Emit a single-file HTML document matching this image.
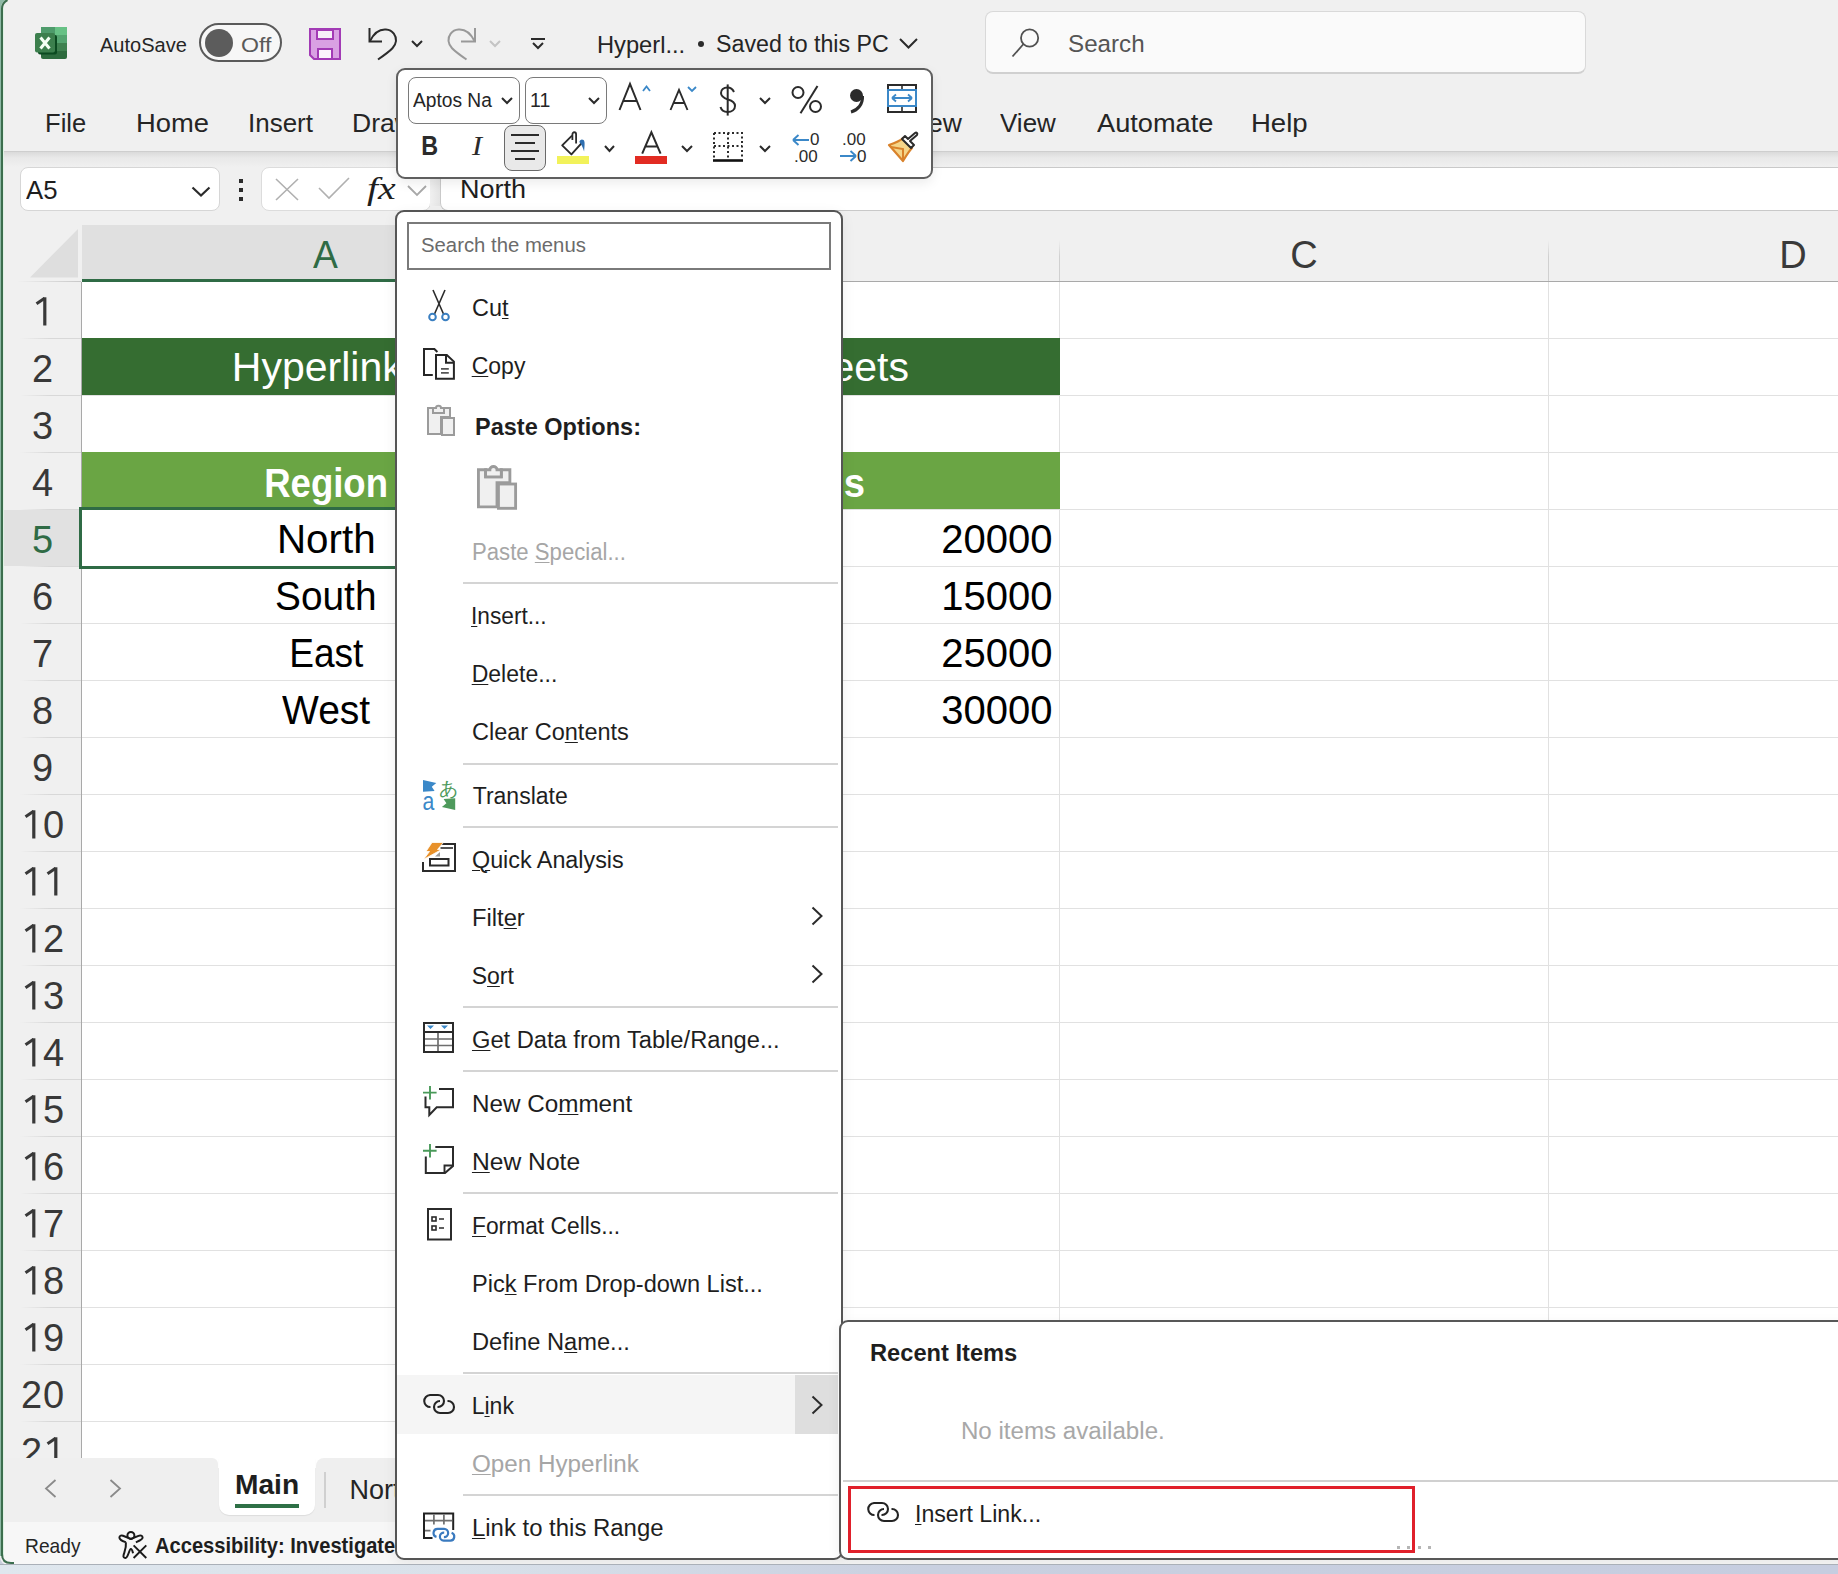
<!DOCTYPE html>
<html><head><meta charset="utf-8"><style>
html,body{margin:0;padding:0;}
body{width:1838px;height:1574px;position:relative;overflow:hidden;background:#c9cfdd;font-family:'Liberation Sans', sans-serif;}
u{text-decoration-thickness:1.2px;text-underline-offset:2px;}

</style></head><body>
<div style="position:absolute;left:0px;top:0px;width:1838px;height:1565px;background:#f0f0f0;border-radius:0 0 0 8px;"></div>
<svg style="position:absolute;left:35px;top:27px;overflow:visible;" width="32" height="32" viewBox="0 0 32 32">
      <rect x="6" y="0" width="26" height="32" rx="2" fill="#2d6b3e"/>
      <rect x="6" y="0" width="14" height="8" fill="#4e9b6b"/>
      <rect x="20" y="0" width="12" height="8" fill="#67c185"/>
      <rect x="20" y="8" width="12" height="8" fill="#54a470"/>
      <rect x="20" y="16" width="12" height="8" fill="#3f8150"/>
      <rect x="3" y="8" width="19" height="19.5" rx="2" fill="#0b4a20"/>
      <rect x="0" y="6" width="20" height="19.5" rx="2" fill="#3c7f4d"/>
      <path d="M5.5 10.5 L14.5 21.5 M14.5 10.5 L5.5 21.5" stroke="#f4fff4" stroke-width="3"/>
    </svg>
<div style="position:absolute;left:99.50px;top:34.65px;font:400 20.5px/20.5px 'Liberation Sans', sans-serif;color:#252525;white-space:nowrap;transform:scaleX(0.9774);transform-origin:0.00px 0;">AutoSave</div>
<div style="position:absolute;left:199px;top:23px;width:83px;height:39px;box-sizing:border-box;border:2px solid #5a5a5a;border-radius:20px;background:#f7f7f7;"></div>
<div style="position:absolute;left:205px;top:29px;width:28px;height:28px;border-radius:50%;background:#5c5c5c;"></div>
<div style="position:absolute;left:240.50px;top:34.23px;font:400 21px/21px 'Liberation Sans', sans-serif;color:#5a5a5a;white-space:nowrap;transform:scaleX(1.1012);transform-origin:1.00px 0;">Off</div>
<svg style="position:absolute;left:309px;top:28px;overflow:visible;" width="32" height="32" viewBox="0 0 32 32">
      <path d="M1 1 H31 V31 H5 L1 27 Z" fill="#d9a1e3" stroke="#a23bb5" stroke-width="2"/>
      <rect x="8" y="2" width="16" height="9" fill="#f6eef8" stroke="#a23bb5" stroke-width="2"/>
      <rect x="9" y="21" width="14" height="10" fill="#fbf5fc" stroke="#a23bb5" stroke-width="2"/>
    </svg>
<svg style="position:absolute;left:368px;top:28px;overflow:visible;" width="30" height="33" viewBox="0 0 30 33">
      <path d="M1.5 0 V13.5 H14" fill="none" stroke="#2b2b2b" stroke-width="2"/>
      <path d="M2 13 C6 5 12 1 18 1.5 C25 2 28.5 8 28 13 C27.5 18 25 21 10 31.5" fill="none" stroke="#2b2b2b" stroke-width="2"/>
    </svg>
<svg style="position:absolute;left:411px;top:40px;overflow:visible;" width="12" height="7" viewBox="0 0 12 7"><path d="M1 1 L6 6 L11 1" fill="none" stroke="#2b2b2b" stroke-width="2"/></svg>
<svg style="position:absolute;left:447px;top:28px;overflow:visible;" width="30" height="33" viewBox="0 0 30 33">
      <path d="M28 0 V13.5 H14" fill="none" stroke="#999" stroke-width="2"/>
      <path d="M27.5 13 C23.5 5 17.5 1 11.5 1.5 C4.5 2 1 8 1.5 13 C2 18 4.5 21 19.5 31.5" fill="none" stroke="#999" stroke-width="2"/>
    </svg>
<svg style="position:absolute;left:489px;top:40px;overflow:visible;" width="12" height="7" viewBox="0 0 12 7"><path d="M1 1 L6 6 L11 1" fill="none" stroke="#c4c4c4" stroke-width="2"/></svg>
<svg style="position:absolute;left:531px;top:38px;overflow:visible;" width="15" height="13" viewBox="0 0 15 13"><path d="M0 1 H14" stroke="#2b2b2b" stroke-width="2"/><path d="M2 5 L7 10 L12 5" fill="none" stroke="#2b2b2b" stroke-width="2"/></svg>
<div style="position:absolute;left:596.80px;top:32.69px;font:400 24px/24px 'Liberation Sans', sans-serif;color:#252525;white-space:nowrap;transform:scaleX(0.9863);transform-origin:1.00px 0;">Hyperl...</div>
<div style="position:absolute;left:698px;top:41px;width:6px;height:6px;border-radius:50%;background:#2b2b2b;"></div>
<div style="position:absolute;left:715.70px;top:33.11px;font:400 23.5px/23.5px 'Liberation Sans', sans-serif;color:#252525;white-space:nowrap;transform:scaleX(0.9870);transform-origin:1.00px 0;">Saved to this PC</div>
<svg style="position:absolute;left:899px;top:38px;overflow:visible;" width="19" height="11" viewBox="0 0 19 11"><path d="M1 1 L9.5 9.5 L18 1" fill="none" stroke="#2b2b2b" stroke-width="2"/></svg>
<div style="position:absolute;left:985px;top:11px;width:601px;height:63px;box-sizing:border-box;background:#fafafa;border:1px solid #d9d9d9;border-bottom:2px solid #d0d0d0;border-radius:8px;"></div>
<svg style="position:absolute;left:1011px;top:27px;overflow:visible;" width="30" height="31" viewBox="0 0 30 31"><circle cx="18.6" cy="11" r="8.6" fill="none" stroke="#505050" stroke-width="1.8"/><path d="M12.5 17 L1.5 29.5" stroke="#505050" stroke-width="1.8"/></svg>
<div style="position:absolute;left:1067.50px;top:32.06px;font:400 24.5px/24.5px 'Liberation Sans', sans-serif;color:#555;white-space:nowrap;transform:scaleX(0.9868);transform-origin:1.00px 0;">Search</div>
<div style="position:absolute;left:44.50px;top:109.77px;font:400 26.5px/26.5px 'Liberation Sans', sans-serif;color:#252525;white-space:nowrap;transform:scaleX(0.9634);transform-origin:2.00px 0;">File</div>
<div style="position:absolute;left:135.80px;top:109.77px;font:400 26.5px/26.5px 'Liberation Sans', sans-serif;color:#252525;white-space:nowrap;transform:scaleX(1.0331);transform-origin:2.00px 0;">Home</div>
<div style="position:absolute;left:248.00px;top:109.77px;font:400 26.5px/26.5px 'Liberation Sans', sans-serif;color:#252525;white-space:nowrap;transform:scaleX(0.9798);transform-origin:2.00px 0;">Insert</div>
<div style="position:absolute;left:352.00px;top:109.77px;font:400 26.5px/26.5px 'Liberation Sans', sans-serif;color:#252525;white-space:nowrap;">Draw</div>
<div style="position:absolute;left:962.00px;top:109.77px;font:400 26.5px/26.5px 'Liberation Sans', sans-serif;color:#252525;white-space:nowrap;transform:translateX(-100%);">Review</div>
<div style="position:absolute;left:1000.00px;top:109.77px;font:400 26.5px/26.5px 'Liberation Sans', sans-serif;color:#252525;white-space:nowrap;transform:scaleX(0.9806);transform-origin:0.00px 0;">View</div>
<div style="position:absolute;left:1096.60px;top:109.77px;font:400 26.5px/26.5px 'Liberation Sans', sans-serif;color:#252525;white-space:nowrap;transform:scaleX(1.0258);transform-origin:0.00px 0;">Automate</div>
<div style="position:absolute;left:1250.90px;top:109.77px;font:400 26.5px/26.5px 'Liberation Sans', sans-serif;color:#252525;white-space:nowrap;transform:scaleX(1.0413);transform-origin:2.00px 0;">Help</div>
<div style="position:absolute;left:0px;top:151px;width:1838px;height:1px;background:#cecece;"></div>
<div style="position:absolute;left:0px;top:152px;width:1838px;height:15px;background:linear-gradient(#dadada,#e9e9e9 40%,#ececec 70%,#f0f0f0);"></div>
<div style="position:absolute;left:20px;top:167px;width:200px;height:44px;box-sizing:border-box;background:#fff;border:1px solid #d6d6d6;border-radius:8px;"></div>
<div style="position:absolute;left:26.00px;top:176.99px;font:400 26px/26px 'Liberation Sans', sans-serif;color:#1e1e1e;white-space:nowrap;transform:scaleX(0.9891);transform-origin:0.00px 0;">A5</div>
<svg style="position:absolute;left:191px;top:186px;overflow:visible;" width="20" height="11" viewBox="0 0 20 11"><path d="M1.5 1.5 L10 9.5 L18.5 1.5" fill="none" stroke="#2b2b2b" stroke-width="2.2"/></svg>
<div style="position:absolute;left:239px;top:179px;width:4px;height:4px;background:#2b2b2b;"></div>
<div style="position:absolute;left:239px;top:188px;width:4px;height:4px;background:#2b2b2b;"></div>
<div style="position:absolute;left:239px;top:197px;width:4px;height:4px;background:#2b2b2b;"></div>
<div style="position:absolute;left:261px;top:167px;width:170px;height:44px;box-sizing:border-box;background:#fff;border:1px solid #dcdcdc;border-radius:8px;"></div>
<svg style="position:absolute;left:275px;top:178px;overflow:visible;" width="24" height="23" viewBox="0 0 24 23"><path d="M1 1 L23 22 M23 1 L1 22" stroke="#b0b0b0" stroke-width="1.6"/></svg>
<svg style="position:absolute;left:318px;top:177px;overflow:visible;" width="32" height="23" viewBox="0 0 32 23"><path d="M1 11 L11 21 L31 1" fill="none" stroke="#b0b0b0" stroke-width="1.6"/></svg>
<div style="position:absolute;left:367.00px;top:173.26px;font:italic 400 31px/31px 'Liberation Serif', serif;color:#1e1e1e;white-space:nowrap;transform:scaleX(1.2825);transform-origin:0.00px 0;">fx</div>
<svg style="position:absolute;left:407px;top:185px;overflow:visible;" width="20" height="11" viewBox="0 0 20 11"><path d="M1 1 L10 10 L19 1" fill="none" stroke="#a8a8a8" stroke-width="1.8"/></svg>
<div style="position:absolute;left:440px;top:167px;width:1400px;height:44px;box-sizing:border-box;background:#fff;border:1px solid #c9c9c9;border-right:none;border-radius:8px 0 0 8px;"></div>
<div style="position:absolute;left:430px;top:172px;width:10px;height:34px;background:linear-gradient(90deg,#f0f0f0,#e4e4e4);"></div>
<div style="position:absolute;left:459.90px;top:176.27px;font:400 26.5px/26.5px 'Liberation Sans', sans-serif;color:#1e1e1e;white-space:nowrap;transform:scaleX(1.0199);transform-origin:2.00px 0;">North</div>
<div style="position:absolute;left:82px;top:225px;width:489px;height:54px;background:#e0e0e0;"></div>
<div style="position:absolute;left:82px;top:279px;width:489px;height:3px;background:#2f6b45;"></div>
<div style="position:absolute;left:571px;top:281px;width:1267px;height:1px;background:#a9a9a9;"></div>
<div style="position:absolute;left:17px;top:281px;width:64px;height:1px;background:linear-gradient(90deg,rgba(200,200,200,0),#c8c8c8);"></div>
<svg style="position:absolute;left:4px;top:225px;overflow:visible;" width="77" height="57" viewBox="0 0 77 57"><path d="M26 52.5 L74 4 V52.5 Z" fill="#dedede"/></svg>
<div style="position:absolute;left:313.30px;top:235.84px;font:400 38px/38px 'Liberation Sans', sans-serif;color:#2f6b45;white-space:nowrap;transform:scaleX(0.9808);transform-origin:0.00px 0;">A</div>
<div style="position:absolute;left:0.00px;top:235.84px;font:400 38px/38px 'Liberation Sans', sans-serif;color:#3a3a3a;white-space:nowrap;width:0;display:flex;justify-content:center;left:1304px !important;">C</div>
<div style="position:absolute;left:0.00px;top:235.84px;font:400 38px/38px 'Liberation Sans', sans-serif;color:#3a3a3a;white-space:nowrap;width:0;display:flex;justify-content:center;left:1793px !important;">D</div>
<div style="position:absolute;left:1059px;top:240px;width:1px;height:41px;background:linear-gradient(rgba(210,210,210,0),#d0d0d0 40%);"></div>
<div style="position:absolute;left:1548px;top:240px;width:1px;height:41px;background:linear-gradient(rgba(210,210,210,0),#d0d0d0 40%);"></div>
<div style="position:absolute;left:82px;top:282px;width:1756px;height:1176px;background:#fff;"></div>
<div style="position:absolute;left:81px;top:282px;width:1px;height:1176px;background:#a9a9a9;"></div>
<div style="position:absolute;left:82px;top:338px;width:1756px;height:1px;background:#e1e1e1;"></div>
<div style="position:absolute;left:20px;top:338px;width:61px;height:1px;background:linear-gradient(90deg,rgba(215,215,215,0),#d8d8d8 50%);"></div>
<div style="position:absolute;left:82px;top:395px;width:1756px;height:1px;background:#e1e1e1;"></div>
<div style="position:absolute;left:20px;top:395px;width:61px;height:1px;background:linear-gradient(90deg,rgba(215,215,215,0),#d8d8d8 50%);"></div>
<div style="position:absolute;left:82px;top:452px;width:1756px;height:1px;background:#e1e1e1;"></div>
<div style="position:absolute;left:20px;top:452px;width:61px;height:1px;background:linear-gradient(90deg,rgba(215,215,215,0),#d8d8d8 50%);"></div>
<div style="position:absolute;left:82px;top:509px;width:1756px;height:1px;background:#e1e1e1;"></div>
<div style="position:absolute;left:20px;top:509px;width:61px;height:1px;background:linear-gradient(90deg,rgba(215,215,215,0),#d8d8d8 50%);"></div>
<div style="position:absolute;left:82px;top:566px;width:1756px;height:1px;background:#e1e1e1;"></div>
<div style="position:absolute;left:20px;top:566px;width:61px;height:1px;background:linear-gradient(90deg,rgba(215,215,215,0),#d8d8d8 50%);"></div>
<div style="position:absolute;left:82px;top:623px;width:1756px;height:1px;background:#e1e1e1;"></div>
<div style="position:absolute;left:20px;top:623px;width:61px;height:1px;background:linear-gradient(90deg,rgba(215,215,215,0),#d8d8d8 50%);"></div>
<div style="position:absolute;left:82px;top:680px;width:1756px;height:1px;background:#e1e1e1;"></div>
<div style="position:absolute;left:20px;top:680px;width:61px;height:1px;background:linear-gradient(90deg,rgba(215,215,215,0),#d8d8d8 50%);"></div>
<div style="position:absolute;left:82px;top:737px;width:1756px;height:1px;background:#e1e1e1;"></div>
<div style="position:absolute;left:20px;top:737px;width:61px;height:1px;background:linear-gradient(90deg,rgba(215,215,215,0),#d8d8d8 50%);"></div>
<div style="position:absolute;left:82px;top:794px;width:1756px;height:1px;background:#e1e1e1;"></div>
<div style="position:absolute;left:20px;top:794px;width:61px;height:1px;background:linear-gradient(90deg,rgba(215,215,215,0),#d8d8d8 50%);"></div>
<div style="position:absolute;left:82px;top:851px;width:1756px;height:1px;background:#e1e1e1;"></div>
<div style="position:absolute;left:20px;top:851px;width:61px;height:1px;background:linear-gradient(90deg,rgba(215,215,215,0),#d8d8d8 50%);"></div>
<div style="position:absolute;left:82px;top:908px;width:1756px;height:1px;background:#e1e1e1;"></div>
<div style="position:absolute;left:20px;top:908px;width:61px;height:1px;background:linear-gradient(90deg,rgba(215,215,215,0),#d8d8d8 50%);"></div>
<div style="position:absolute;left:82px;top:965px;width:1756px;height:1px;background:#e1e1e1;"></div>
<div style="position:absolute;left:20px;top:965px;width:61px;height:1px;background:linear-gradient(90deg,rgba(215,215,215,0),#d8d8d8 50%);"></div>
<div style="position:absolute;left:82px;top:1022px;width:1756px;height:1px;background:#e1e1e1;"></div>
<div style="position:absolute;left:20px;top:1022px;width:61px;height:1px;background:linear-gradient(90deg,rgba(215,215,215,0),#d8d8d8 50%);"></div>
<div style="position:absolute;left:82px;top:1079px;width:1756px;height:1px;background:#e1e1e1;"></div>
<div style="position:absolute;left:20px;top:1079px;width:61px;height:1px;background:linear-gradient(90deg,rgba(215,215,215,0),#d8d8d8 50%);"></div>
<div style="position:absolute;left:82px;top:1136px;width:1756px;height:1px;background:#e1e1e1;"></div>
<div style="position:absolute;left:20px;top:1136px;width:61px;height:1px;background:linear-gradient(90deg,rgba(215,215,215,0),#d8d8d8 50%);"></div>
<div style="position:absolute;left:82px;top:1193px;width:1756px;height:1px;background:#e1e1e1;"></div>
<div style="position:absolute;left:20px;top:1193px;width:61px;height:1px;background:linear-gradient(90deg,rgba(215,215,215,0),#d8d8d8 50%);"></div>
<div style="position:absolute;left:82px;top:1250px;width:1756px;height:1px;background:#e1e1e1;"></div>
<div style="position:absolute;left:20px;top:1250px;width:61px;height:1px;background:linear-gradient(90deg,rgba(215,215,215,0),#d8d8d8 50%);"></div>
<div style="position:absolute;left:82px;top:1307px;width:1756px;height:1px;background:#e1e1e1;"></div>
<div style="position:absolute;left:20px;top:1307px;width:61px;height:1px;background:linear-gradient(90deg,rgba(215,215,215,0),#d8d8d8 50%);"></div>
<div style="position:absolute;left:82px;top:1364px;width:1756px;height:1px;background:#e1e1e1;"></div>
<div style="position:absolute;left:20px;top:1364px;width:61px;height:1px;background:linear-gradient(90deg,rgba(215,215,215,0),#d8d8d8 50%);"></div>
<div style="position:absolute;left:82px;top:1421px;width:1756px;height:1px;background:#e1e1e1;"></div>
<div style="position:absolute;left:20px;top:1421px;width:61px;height:1px;background:linear-gradient(90deg,rgba(215,215,215,0),#d8d8d8 50%);"></div>
<div style="position:absolute;left:1059px;top:282px;width:1px;height:1176px;background:#e1e1e1;"></div>
<div style="position:absolute;left:1548px;top:282px;width:1px;height:1176px;background:#e1e1e1;"></div>
<div style="position:absolute;left:82px;top:338px;width:978px;height:57px;background:#356d31;"></div>
<div style="position:absolute;left:82px;top:452px;width:978px;height:57px;background:#6aa544;"></div>
<div style="position:absolute;left:4px;top:510px;width:77px;height:56px;background:#e1e1e1;"></div>
<svg style="position:absolute;left:31.55px;top:297px;overflow:visible;" width="20" height="30" viewBox="0 0 20 30"><path d="M4.5 6.8 L12.6 1.2" stroke="#383838" stroke-width="3" stroke-linecap="butt"/><path d="M12.8 0.3 V28.5" stroke="#383838" stroke-width="3.2"/></svg>
<div style="position:absolute;left:31.95px;top:349.84px;font:400 38px/38px 'Liberation Sans', sans-serif;color:#383838;white-space:nowrap;">2</div>
<div style="position:absolute;left:31.95px;top:406.84px;font:400 38px/38px 'Liberation Sans', sans-serif;color:#383838;white-space:nowrap;">3</div>
<div style="position:absolute;left:31.95px;top:463.84px;font:400 38px/38px 'Liberation Sans', sans-serif;color:#383838;white-space:nowrap;">4</div>
<div style="position:absolute;left:31.95px;top:520.84px;font:400 38px/38px 'Liberation Sans', sans-serif;color:#2f6b45;white-space:nowrap;">5</div>
<div style="position:absolute;left:31.95px;top:577.84px;font:400 38px/38px 'Liberation Sans', sans-serif;color:#383838;white-space:nowrap;">6</div>
<div style="position:absolute;left:31.95px;top:634.84px;font:400 38px/38px 'Liberation Sans', sans-serif;color:#383838;white-space:nowrap;">7</div>
<div style="position:absolute;left:31.95px;top:691.84px;font:400 38px/38px 'Liberation Sans', sans-serif;color:#383838;white-space:nowrap;">8</div>
<div style="position:absolute;left:31.95px;top:748.84px;font:400 38px/38px 'Liberation Sans', sans-serif;color:#383838;white-space:nowrap;">9</div>
<svg style="position:absolute;left:20.6px;top:810px;overflow:visible;" width="20" height="30" viewBox="0 0 20 30"><path d="M4.5 6.8 L12.6 1.2" stroke="#383838" stroke-width="3" stroke-linecap="butt"/><path d="M12.8 0.3 V28.5" stroke="#383838" stroke-width="3.2"/></svg>
<div style="position:absolute;left:42.90px;top:805.84px;font:400 38px/38px 'Liberation Sans', sans-serif;color:#383838;white-space:nowrap;">0</div>
<svg style="position:absolute;left:20.6px;top:867px;overflow:visible;" width="20" height="30" viewBox="0 0 20 30"><path d="M4.5 6.8 L12.6 1.2" stroke="#383838" stroke-width="3" stroke-linecap="butt"/><path d="M12.8 0.3 V28.5" stroke="#383838" stroke-width="3.2"/></svg>
<svg style="position:absolute;left:42.5px;top:867px;overflow:visible;" width="20" height="30" viewBox="0 0 20 30"><path d="M4.5 6.8 L12.6 1.2" stroke="#383838" stroke-width="3" stroke-linecap="butt"/><path d="M12.8 0.3 V28.5" stroke="#383838" stroke-width="3.2"/></svg>
<svg style="position:absolute;left:20.6px;top:924px;overflow:visible;" width="20" height="30" viewBox="0 0 20 30"><path d="M4.5 6.8 L12.6 1.2" stroke="#383838" stroke-width="3" stroke-linecap="butt"/><path d="M12.8 0.3 V28.5" stroke="#383838" stroke-width="3.2"/></svg>
<div style="position:absolute;left:42.90px;top:919.84px;font:400 38px/38px 'Liberation Sans', sans-serif;color:#383838;white-space:nowrap;">2</div>
<svg style="position:absolute;left:20.6px;top:981px;overflow:visible;" width="20" height="30" viewBox="0 0 20 30"><path d="M4.5 6.8 L12.6 1.2" stroke="#383838" stroke-width="3" stroke-linecap="butt"/><path d="M12.8 0.3 V28.5" stroke="#383838" stroke-width="3.2"/></svg>
<div style="position:absolute;left:42.90px;top:976.84px;font:400 38px/38px 'Liberation Sans', sans-serif;color:#383838;white-space:nowrap;">3</div>
<svg style="position:absolute;left:20.6px;top:1038px;overflow:visible;" width="20" height="30" viewBox="0 0 20 30"><path d="M4.5 6.8 L12.6 1.2" stroke="#383838" stroke-width="3" stroke-linecap="butt"/><path d="M12.8 0.3 V28.5" stroke="#383838" stroke-width="3.2"/></svg>
<div style="position:absolute;left:42.90px;top:1033.84px;font:400 38px/38px 'Liberation Sans', sans-serif;color:#383838;white-space:nowrap;">4</div>
<svg style="position:absolute;left:20.6px;top:1095px;overflow:visible;" width="20" height="30" viewBox="0 0 20 30"><path d="M4.5 6.8 L12.6 1.2" stroke="#383838" stroke-width="3" stroke-linecap="butt"/><path d="M12.8 0.3 V28.5" stroke="#383838" stroke-width="3.2"/></svg>
<div style="position:absolute;left:42.90px;top:1090.84px;font:400 38px/38px 'Liberation Sans', sans-serif;color:#383838;white-space:nowrap;">5</div>
<svg style="position:absolute;left:20.6px;top:1152px;overflow:visible;" width="20" height="30" viewBox="0 0 20 30"><path d="M4.5 6.8 L12.6 1.2" stroke="#383838" stroke-width="3" stroke-linecap="butt"/><path d="M12.8 0.3 V28.5" stroke="#383838" stroke-width="3.2"/></svg>
<div style="position:absolute;left:42.90px;top:1147.84px;font:400 38px/38px 'Liberation Sans', sans-serif;color:#383838;white-space:nowrap;">6</div>
<svg style="position:absolute;left:20.6px;top:1209px;overflow:visible;" width="20" height="30" viewBox="0 0 20 30"><path d="M4.5 6.8 L12.6 1.2" stroke="#383838" stroke-width="3" stroke-linecap="butt"/><path d="M12.8 0.3 V28.5" stroke="#383838" stroke-width="3.2"/></svg>
<div style="position:absolute;left:42.90px;top:1204.84px;font:400 38px/38px 'Liberation Sans', sans-serif;color:#383838;white-space:nowrap;">7</div>
<svg style="position:absolute;left:20.6px;top:1266px;overflow:visible;" width="20" height="30" viewBox="0 0 20 30"><path d="M4.5 6.8 L12.6 1.2" stroke="#383838" stroke-width="3" stroke-linecap="butt"/><path d="M12.8 0.3 V28.5" stroke="#383838" stroke-width="3.2"/></svg>
<div style="position:absolute;left:42.90px;top:1261.84px;font:400 38px/38px 'Liberation Sans', sans-serif;color:#383838;white-space:nowrap;">8</div>
<svg style="position:absolute;left:20.6px;top:1323px;overflow:visible;" width="20" height="30" viewBox="0 0 20 30"><path d="M4.5 6.8 L12.6 1.2" stroke="#383838" stroke-width="3" stroke-linecap="butt"/><path d="M12.8 0.3 V28.5" stroke="#383838" stroke-width="3.2"/></svg>
<div style="position:absolute;left:42.90px;top:1318.84px;font:400 38px/38px 'Liberation Sans', sans-serif;color:#383838;white-space:nowrap;">9</div>
<div style="position:absolute;left:21.00px;top:1375.84px;font:400 38px/38px 'Liberation Sans', sans-serif;color:#383838;white-space:nowrap;">2</div>
<div style="position:absolute;left:42.90px;top:1375.84px;font:400 38px/38px 'Liberation Sans', sans-serif;color:#383838;white-space:nowrap;">0</div>
<div style="position:absolute;left:21.00px;top:1432.84px;font:400 38px/38px 'Liberation Sans', sans-serif;color:#383838;white-space:nowrap;">2</div>
<svg style="position:absolute;left:42.5px;top:1437px;overflow:visible;" width="20" height="30" viewBox="0 0 20 30"><path d="M4.5 6.8 L12.6 1.2" stroke="#383838" stroke-width="3" stroke-linecap="butt"/><path d="M12.8 0.3 V28.5" stroke="#383838" stroke-width="3.2"/></svg>
<div style="position:absolute;left:79px;top:507px;width:495px;height:62px;box-sizing:border-box;border:3px solid #2f6b45;"></div>
<div style="position:absolute;left:231.80px;top:347.00px;font:400 41px/41px 'Liberation Sans', sans-serif;color:#ffffff;white-space:nowrap;">Hyperlinks to Other</div>
<div style="position:absolute;left:909.00px;top:347.00px;font:400 41px/41px 'Liberation Sans', sans-serif;color:#ffffff;white-space:nowrap;transform:translateX(-100%);">Worksheets</div>
<div style="position:absolute;left:264.00px;top:463.14px;font:700 40px/40px 'Liberation Sans', sans-serif;color:#ffffff;white-space:nowrap;transform:scaleX(0.9137);transform-origin:2.00px 0;">Region</div>
<div style="position:absolute;left:765.00px;top:463.14px;font:700 40px/40px 'Liberation Sans', sans-serif;color:#ffffff;white-space:nowrap;transform:scaleX(0.9562);transform-origin:1.00px 0;">Sales</div>
<div style="position:absolute;left:277.10px;top:519.14px;font:400 40px/40px 'Liberation Sans', sans-serif;color:#000;white-space:nowrap;transform:scaleX(1.0090);transform-origin:3.00px 0;">North</div>
<div style="position:absolute;left:275.20px;top:576.14px;font:400 40px/40px 'Liberation Sans', sans-serif;color:#000;white-space:nowrap;transform:scaleX(0.9705);transform-origin:1.00px 0;">South</div>
<div style="position:absolute;left:288.90px;top:633.14px;font:400 40px/40px 'Liberation Sans', sans-serif;color:#000;white-space:nowrap;transform:scaleX(0.9269);transform-origin:3.00px 0;">East</div>
<div style="position:absolute;left:282.10px;top:690.14px;font:400 40px/40px 'Liberation Sans', sans-serif;color:#000;white-space:nowrap;transform:scaleX(0.9759);transform-origin:0.00px 0;">West</div>
<div style="position:absolute;left:1052.50px;top:519.14px;font:400 40px/40px 'Liberation Sans', sans-serif;color:#000;white-space:nowrap;transform:translateX(-100%);">20000</div>
<div style="position:absolute;left:1052.50px;top:576.14px;font:400 40px/40px 'Liberation Sans', sans-serif;color:#000;white-space:nowrap;transform:translateX(-100%);">15000</div>
<div style="position:absolute;left:1052.50px;top:633.14px;font:400 40px/40px 'Liberation Sans', sans-serif;color:#000;white-space:nowrap;transform:translateX(-100%);">25000</div>
<div style="position:absolute;left:1052.50px;top:690.14px;font:400 40px/40px 'Liberation Sans', sans-serif;color:#000;white-space:nowrap;transform:translateX(-100%);">30000</div>
<div style="position:absolute;left:4px;top:1458px;width:1834px;height:64px;background:#efefef;"></div>
<div style="position:absolute;left:209px;top:1458px;width:118px;height:10px;background:#fff;"></div>
<div style="position:absolute;left:4px;top:1458px;width:214px;height:64px;background:#efefef;border-radius:0 6px 0 0;"></div>
<div style="position:absolute;left:316px;top:1458px;width:1522px;height:64px;background:#efefef;border-radius:8px 0 0 0;"></div>
<div style="position:absolute;left:219px;top:1458px;width:96px;height:57px;background:#fff;border-radius:0 0 10px 10px;box-shadow:0 1px 1px rgba(0,0,0,0.08);"></div>
<svg style="position:absolute;left:44px;top:1479px;overflow:visible;" width="13" height="19" viewBox="0 0 13 19"><path d="M11.5 1 L2 9.5 L11.5 18" fill="none" stroke="#8a8a8a" stroke-width="1.8"/></svg>
<svg style="position:absolute;left:109px;top:1479px;overflow:visible;" width="13" height="19" viewBox="0 0 13 19"><path d="M1.5 1 L11 9.5 L1.5 18" fill="none" stroke="#8a8a8a" stroke-width="1.8"/></svg>
<div style="position:absolute;left:235.00px;top:1470.70px;font:700 28px/28px 'Liberation Sans', sans-serif;color:#1e1e1e;white-space:nowrap;transform:scaleX(1.0053);transform-origin:1.00px 0;">Main</div>
<div style="position:absolute;left:235px;top:1504px;width:64px;height:4px;background:#2e7046;"></div>
<div style="position:absolute;left:324px;top:1472px;width:2px;height:36px;background:#d0d0d0;"></div>
<div style="position:absolute;left:349.50px;top:1477.45px;font:400 27px/27px 'Liberation Sans', sans-serif;color:#252525;white-space:nowrap;">North</div>
<div style="position:absolute;left:4px;top:1522px;width:1834px;height:42px;background:#f7f7f7;"></div>
<div style="position:absolute;left:25.00px;top:1535.03px;font:400 21px/21px 'Liberation Sans', sans-serif;color:#252525;white-space:nowrap;transform:scaleX(0.9136);transform-origin:1.00px 0;">Ready</div>
<svg style="position:absolute;left:112px;top:1525px;overflow:visible;" width="40" height="40" viewBox="0 0 40 40">
      <circle cx="18.9" cy="10.4" r="3.5" fill="none" stroke="#1a1a1a" stroke-width="2"/>
      <path d="M13.9 17.3 C10 15.8 7.2 14.8 7.4 12.3 C7.6 10.5 9.5 10.2 11 10.8 L18.9 14 L26.5 10.8 C28.5 10 30.5 10.7 30.6 12.5 C30.7 14.5 28 15.5 23.9 17.3" fill="none" stroke="#1a1a1a" stroke-width="2"/>
      <path d="M13.9 17.3 C14.5 23 12.5 27 11.6 30 C11 32 12 33 13.5 32.9 C15 32.8 15.8 30.5 16.5 28.5 C17.5 25.5 18 24 18.9 24 C20 24 20.5 26 21.1 28.3" fill="none" stroke="#1a1a1a" stroke-width="2"/>
      <path d="M21.6 20.3 L34.3 33 M34.3 20.3 L21.6 33" stroke="#1a1a1a" stroke-width="1.9"/>
    </svg>
<div style="position:absolute;left:154.50px;top:1534.88px;font:700 22px/22px 'Liberation Sans', sans-serif;color:#1e1e1e;white-space:nowrap;transform:scaleX(0.9138);transform-origin:0.00px 0;">Accessibility: Investigate</div>
<div style="position:absolute;left:395px;top:210px;width:448px;height:1350px;box-sizing:border-box;background:#fff;border:2px solid #555;border-radius:9px;box-shadow:0 4px 14px rgba(0,0,0,0.07);"></div>
<div style="position:absolute;left:407px;top:222px;width:424px;height:48px;box-sizing:border-box;border:2px solid #7a7a7a;background:#fff;"></div>
<div style="position:absolute;left:420.70px;top:234.55px;font:400 20.5px/20.5px 'Liberation Sans', sans-serif;color:#6b6b6b;white-space:nowrap;transform:scaleX(0.9908);transform-origin:0.00px 0;">Search the menus</div>
<div style="position:absolute;left:471.70px;top:296.53px;font:400 23px/23px 'Liberation Sans', sans-serif;color:#1e1e1e;white-space:nowrap;transform:scaleX(1.0197);transform-origin:1.00px 0;">Cu<u>t</u></div>
<div style="position:absolute;left:471.70px;top:354.53px;font:400 23px/23px 'Liberation Sans', sans-serif;color:#1e1e1e;white-space:nowrap;"><u>C</u>opy</div>
<div style="position:absolute;left:475.00px;top:415.49px;font:700 24px/24px 'Liberation Sans', sans-serif;color:#1e1e1e;white-space:nowrap;transform:scaleX(0.9798);transform-origin:1.00px 0;">Paste Options:</div>
<div style="position:absolute;left:471.70px;top:540.53px;font:400 23px/23px 'Liberation Sans', sans-serif;color:#a6a6a6;white-space:nowrap;transform:scaleX(0.9624);transform-origin:1.00px 0;">Paste <u>S</u>pecial...</div>
<div style="position:absolute;left:463px;top:582px;width:375px;height:2px;background:#d4d4d4;"></div>
<div style="position:absolute;left:470.70px;top:604.53px;font:400 23px/23px 'Liberation Sans', sans-serif;color:#1e1e1e;white-space:nowrap;transform:scaleX(0.9863);transform-origin:2.00px 0;"><u>I</u>nsert...</div>
<div style="position:absolute;left:471.70px;top:662.53px;font:400 23px/23px 'Liberation Sans', sans-serif;color:#1e1e1e;white-space:nowrap;"><u>D</u>elete...</div>
<div style="position:absolute;left:471.70px;top:720.53px;font:400 23px/23px 'Liberation Sans', sans-serif;color:#1e1e1e;white-space:nowrap;transform:scaleX(1.0223);transform-origin:1.00px 0;">Clear Co<u>n</u>tents</div>
<div style="position:absolute;left:463px;top:763px;width:375px;height:2px;background:#d4d4d4;"></div>
<div style="position:absolute;left:472.70px;top:784.53px;font:400 23px/23px 'Liberation Sans', sans-serif;color:#1e1e1e;white-space:nowrap;">Translate</div>
<div style="position:absolute;left:463px;top:826px;width:375px;height:2px;background:#d4d4d4;"></div>
<div style="position:absolute;left:471.70px;top:848.53px;font:400 23px/23px 'Liberation Sans', sans-serif;color:#1e1e1e;white-space:nowrap;transform:scaleX(1.0146);transform-origin:1.00px 0;"><u>Q</u>uick Analysis</div>
<div style="position:absolute;left:471.70px;top:906.53px;font:400 23px/23px 'Liberation Sans', sans-serif;color:#1e1e1e;white-space:nowrap;transform:scaleX(1.0327);transform-origin:1.00px 0;">Filt<u>e</u>r</div>
<svg style="position:absolute;left:811px;top:906px;overflow:visible;" width="12" height="20" viewBox="0 0 12 20"><path d="M1.5 1.5 L10.5 10 L1.5 18.5" fill="none" stroke="#2b2b2b" stroke-width="2"/></svg>
<div style="position:absolute;left:471.70px;top:964.53px;font:400 23px/23px 'Liberation Sans', sans-serif;color:#1e1e1e;white-space:nowrap;">S<u>o</u>rt</div>
<svg style="position:absolute;left:811px;top:964px;overflow:visible;" width="12" height="20" viewBox="0 0 12 20"><path d="M1.5 1.5 L10.5 10 L1.5 18.5" fill="none" stroke="#2b2b2b" stroke-width="2"/></svg>
<div style="position:absolute;left:463px;top:1006px;width:375px;height:2px;background:#d4d4d4;"></div>
<div style="position:absolute;left:471.70px;top:1028.53px;font:400 23px/23px 'Liberation Sans', sans-serif;color:#1e1e1e;white-space:nowrap;transform:scaleX(1.0301);transform-origin:1.00px 0;"><u>G</u>et Data from Table/Range...</div>
<div style="position:absolute;left:463px;top:1070px;width:375px;height:2px;background:#d4d4d4;"></div>
<div style="position:absolute;left:471.70px;top:1092.53px;font:400 23px/23px 'Liberation Sans', sans-serif;color:#1e1e1e;white-space:nowrap;transform:scaleX(1.0540);transform-origin:1.00px 0;">New Co<u>m</u>ment</div>
<div style="position:absolute;left:471.70px;top:1150.53px;font:400 23px/23px 'Liberation Sans', sans-serif;color:#1e1e1e;white-space:nowrap;transform:scaleX(1.0716);transform-origin:1.00px 0;"><u>N</u>ew Note</div>
<div style="position:absolute;left:463px;top:1192px;width:375px;height:2px;background:#d4d4d4;"></div>
<div style="position:absolute;left:471.70px;top:1214.53px;font:400 23px/23px 'Liberation Sans', sans-serif;color:#1e1e1e;white-space:nowrap;transform:scaleX(0.9909);transform-origin:1.00px 0;"><u>F</u>ormat Cells...</div>
<div style="position:absolute;left:471.70px;top:1272.53px;font:400 23px/23px 'Liberation Sans', sans-serif;color:#1e1e1e;white-space:nowrap;transform:scaleX(1.0254);transform-origin:1.00px 0;">Pic<u>k</u> From Drop-down List...</div>
<div style="position:absolute;left:471.70px;top:1330.53px;font:400 23px/23px 'Liberation Sans', sans-serif;color:#1e1e1e;white-space:nowrap;transform:scaleX(1.0291);transform-origin:1.00px 0;">Define N<u>a</u>me...</div>
<div style="position:absolute;left:463px;top:1372px;width:375px;height:2px;background:#d4d4d4;"></div>
<div style="position:absolute;left:397px;top:1375px;width:398px;height:59px;background:#f5f5f5;"></div>
<div style="position:absolute;left:795px;top:1375px;width:43px;height:59px;background:#dedede;"></div>
<div style="position:absolute;left:471.70px;top:1394.53px;font:400 23px/23px 'Liberation Sans', sans-serif;color:#1e1e1e;white-space:nowrap;">L<u>i</u>nk</div>
<svg style="position:absolute;left:811px;top:1395px;overflow:visible;" width="12" height="20" viewBox="0 0 12 20"><path d="M1.5 1.5 L10.5 10 L1.5 18.5" fill="none" stroke="#2b2b2b" stroke-width="2"/></svg>
<div style="position:absolute;left:471.70px;top:1452.53px;font:400 23px/23px 'Liberation Sans', sans-serif;color:#a6a6a6;white-space:nowrap;transform:scaleX(1.0530);transform-origin:1.00px 0;"><u>O</u>pen Hyperlink</div>
<div style="position:absolute;left:463px;top:1494px;width:375px;height:2px;background:#d4d4d4;"></div>
<div style="position:absolute;left:471.70px;top:1516.53px;font:400 23px/23px 'Liberation Sans', sans-serif;color:#1e1e1e;white-space:nowrap;transform:scaleX(1.0405);transform-origin:1.00px 0;"><u>L</u>ink to this Range</div>
<svg style="position:absolute;left:428px;top:290px;overflow:visible;" width="22" height="32" viewBox="0 0 22 32">
      <path d="M5 0 L15.5 24 M17 0 L6.5 24" stroke="#2b2b2b" stroke-width="1.6"/>
      <circle cx="4.5" cy="27" r="3.3" fill="#fff" stroke="#3a7fc1" stroke-width="2"/>
      <circle cx="17.5" cy="27" r="3.3" fill="#fff" stroke="#3a7fc1" stroke-width="2"/>
    </svg>
<svg style="position:absolute;left:423px;top:348px;overflow:visible;" width="33" height="33" viewBox="0 0 33 33">
      <path d="M9.8 27 H1 V1 H11.4 L14.4 4" fill="none" stroke="#262626" stroke-width="2"/>
      <path d="M13 7 H23.8 L30.9 13.6 V30.8 H13 Z" fill="#fff" stroke="#262626" stroke-width="2"/>
      <path d="M23 7 V14.7 H30.9" fill="none" stroke="#262626" stroke-width="2"/>
      <path d="M18 20.9 H25.8 M18 24.9 H25.8" stroke="#555" stroke-width="1.6"/>
    </svg>
<svg style="position:absolute;left:427px;top:404px;overflow:visible;" width="28.0" height="32.0" viewBox="0 0 28.0 32.0"><g transform="scale(1.0)">
          <path d="M1 4 H6 V9 H17 V4 H23 V13 H14 V30 H1 Z" fill="#f0f0f0" stroke="#9b9b9b" stroke-width="2"/>
          <path d="M6 4 H9 C9 1 14 1 14 4 H17 V9 H6 Z" fill="#f0f0f0" stroke="#9b9b9b" stroke-width="2"/>
          <rect x="15" y="14" width="12" height="17" fill="#f0f0f0" stroke="#9b9b9b" stroke-width="2"/>
        </g></svg>
<svg style="position:absolute;left:477px;top:464px;overflow:visible;" width="40.04" height="45.76" viewBox="0 0 40.04 45.76"><g transform="scale(1.43)">
          <path d="M1 4 H6 V9 H17 V4 H23 V13 H14 V30 H1 Z" fill="#f0f0f0" stroke="#9b9b9b" stroke-width="2"/>
          <path d="M6 4 H9 C9 1 14 1 14 4 H17 V9 H6 Z" fill="#f0f0f0" stroke="#9b9b9b" stroke-width="2"/>
          <rect x="15" y="14" width="12" height="17" fill="#f0f0f0" stroke="#9b9b9b" stroke-width="2"/>
        </g></svg>
<svg style="position:absolute;left:422px;top:777px;overflow:visible;" width="34" height="34" viewBox="0 0 34 34">
      <path d="M1 3.1 L14.3 5.9 L9.8 9.8 L12.6 14 L1 14.7 Z" fill="#3b88c8"/>
      <text x="0.5" y="33" font-family="Liberation Sans" font-size="25" fill="#3b88c8" transform="scale(0.85 1)" style="transform-origin:0.5px 33px">a</text>
      <text x="16.5" y="17.5" font-family="Liberation Sans" font-size="19" fill="#4e9a5c">あ</text>
      <path d="M33.2 32.9 L19.9 30.1 L24.4 26.2 L21.6 22 L33.2 21.3 Z" fill="#4e9a5c"/>
    </svg>
<svg style="position:absolute;left:422px;top:842px;overflow:visible;" width="34" height="31" viewBox="0 0 34 31">
      <path d="M16.8 2 H33 V29 H1 V20" fill="none" stroke="#2b2b2b" stroke-width="2"/>
      <path d="M18.5 6 H31" stroke="#2b2b2b" stroke-width="1.6"/>
      <rect x="8" y="17" width="18.5" height="6.5" fill="#fff" stroke="#2b2b2b" stroke-width="2"/>
      <path d="M13 14.5 L18 10 V14.5 Z" fill="#9b9b9b"/>
      <path d="M10 0.5 H21.5 L15.5 7.5 H19.5 L1.5 17.5 L7.5 9.5 H4 Z" fill="#e8912a" stroke="#fff" stroke-width="0.8"/>
    </svg>
<svg style="position:absolute;left:423px;top:1022px;overflow:visible;" width="31" height="31" viewBox="0 0 31 31">
      <rect x="1" y="1" width="29" height="29" fill="#fff" stroke="#2b2b2b" stroke-width="2"/>
      <path d="M1 10 H30" stroke="#2b2b2b" stroke-width="2"/>
      <path d="M2 17 H29 M2 23.5 H29 M15 11 V29" stroke="#6e6e6e" stroke-width="1.7"/>
      <path d="M4 3.5 H11 L7.5 7 Z M18 3.5 H25 L21.5 7 Z" fill="#3b88c8"/>
    </svg>
<svg style="position:absolute;left:423px;top:1086px;overflow:visible;" width="32" height="31" viewBox="0 0 32 31">
      <path d="M16 3 H30 V21.3 H13.7 L6.3 29 V21.3 H2.5 V10.5" fill="none" stroke="#2b2b2b" stroke-width="2"/>
      <path d="M7 0 V13.6 M0 6.6 H13.6" stroke="#4a9a5a" stroke-width="1.9"/>
    </svg>
<svg style="position:absolute;left:423px;top:1144px;overflow:visible;" width="32" height="31" viewBox="0 0 32 31">
      <path d="M12.3 3 H30 V22 L22 29 H2.8 V12.4" fill="none" stroke="#2b2b2b" stroke-width="2"/>
      <path d="M30 21.5 H21.5 V29" fill="none" stroke="#2b2b2b" stroke-width="1.9"/>
      <path d="M7 0 V13.6 M0 6.8 H13.6" stroke="#4a9a5a" stroke-width="1.9"/>
    </svg>
<svg style="position:absolute;left:426px;top:1208px;overflow:visible;" width="26" height="33" viewBox="0 0 26 33">
      <rect x="2" y="1" width="23" height="30.5" fill="#fff" stroke="#2b2b2b" stroke-width="2"/>
      <rect x="6" y="9" width="4" height="4" fill="none" stroke="#2b2b2b" stroke-width="1.6"/>
      <rect x="6" y="18" width="4" height="4" fill="none" stroke="#2b2b2b" stroke-width="1.6"/>
      <path d="M13 11 H18 M13 20 H18" stroke="#2b2b2b" stroke-width="1.6"/>
    </svg>
<svg style="position:absolute;left:415.7px;top:1386.8px;overflow:visible;" width="46" height="34" viewBox="0 0 46 34"><path d="M14.5 20 A6 6 0 0 1 14 8 H22 A6 6 0 0 1 22 20 H21.5" fill="none" stroke="#242424" stroke-width="2.1"/><path d="M24 14 A6 6 0 0 0 24 26 H32 A6 6 0 0 0 32 14 H31.5" fill="none" stroke="#242424" stroke-width="2.1"/></svg>
<svg style="position:absolute;left:415px;top:1505px;overflow:visible;" width="50" height="45" viewBox="0 0 50 45">
      <path d="M17.5 33 H9 V8.6 H38.2 V25" fill="none" stroke="#222" stroke-width="2"/>
      <path d="M10 15.7 H37.2 M18.9 9.6 V19.5 M28.9 9.6 V19.5 M10 25.7 H15.5" fill="none" stroke="#6e6e6e" stroke-width="1.7"/>
      <path d="M21.5 31.9 A4.05 4.05 0 0 1 22.7 23.95 H29.1 A4.05 4.05 0 0 1 29.1 32.05 H28.9" fill="none" stroke="#3a7abf" stroke-width="2.2"/>
      <path d="M29.2 27.55 A4.05 4.05 0 0 0 28.7 35.65 H35.4 A4.05 4.05 0 0 0 36.6 27.8" fill="none" stroke="#3a7abf" stroke-width="2.2"/>
    </svg>
<div style="position:absolute;left:839px;top:1320px;width:1010px;height:240px;box-sizing:border-box;background:#fff;border:2px solid #585858;border-right:none;border-radius:9px 0 0 9px;box-shadow:0 4px 14px rgba(0,0,0,0.06);"></div>
<div style="position:absolute;left:870.40px;top:1341.91px;font:700 23.5px/23.5px 'Liberation Sans', sans-serif;color:#1e1e1e;white-space:nowrap;transform:scaleX(1.0068);transform-origin:1.00px 0;">Recent Items</div>
<div style="position:absolute;left:960.60px;top:1419.83px;font:400 23px/23px 'Liberation Sans', sans-serif;color:#a8a8a8;white-space:nowrap;transform:scaleX(1.0489);transform-origin:1.00px 0;">No items available.</div>
<div style="position:absolute;left:843px;top:1480px;width:995px;height:2px;background:#d0d0d0;"></div>
<svg style="position:absolute;left:860px;top:1495px;overflow:visible;" width="46" height="34" viewBox="0 0 46 34"><path d="M14.5 20 A6 6 0 0 1 14 8 H22 A6 6 0 0 1 22 20 H21.5" fill="none" stroke="#242424" stroke-width="2.1"/><path d="M24 14 A6 6 0 0 0 24 26 H32 A6 6 0 0 0 32 14 H31.5" fill="none" stroke="#242424" stroke-width="2.1"/></svg>
<div style="position:absolute;left:914.70px;top:1502.53px;font:400 23px/23px 'Liberation Sans', sans-serif;color:#1e1e1e;white-space:nowrap;transform:scaleX(1.0067);transform-origin:2.00px 0;"><u>I</u>nsert Link...</div>
<div style="position:absolute;left:848px;top:1486px;width:567px;height:67px;box-sizing:border-box;border:3.5px solid #e0202b;"></div>
<div style="position:absolute;left:1397px;top:1546px;width:3px;height:3px;background:#b5b5b5;"></div>
<div style="position:absolute;left:1407px;top:1546px;width:3px;height:3px;background:#b5b5b5;"></div>
<div style="position:absolute;left:1418px;top:1546px;width:3px;height:3px;background:#b5b5b5;"></div>
<div style="position:absolute;left:1428px;top:1546px;width:3px;height:3px;background:#b5b5b5;"></div>
<div style="position:absolute;left:396px;top:68px;width:537px;height:111px;box-sizing:border-box;background:#fff;border:2px solid #5f5f5f;border-radius:9px;box-shadow:0 4px 12px rgba(0,0,0,0.08);"></div>
<div style="position:absolute;left:408px;top:77px;width:112px;height:47px;box-sizing:border-box;border:1.5px solid #7a7a7a;border-radius:8px;background:#fff;"></div>
<div style="position:absolute;left:412.80px;top:91.20px;font:400 19.5px/19.5px 'Liberation Sans', sans-serif;color:#252525;white-space:nowrap;transform:scaleX(0.9830);transform-origin:0.00px 0;">Aptos Na</div>
<svg style="position:absolute;left:501px;top:97px;overflow:visible;" width="12" height="7" viewBox="0 0 12 7"><path d="M1 1 L6.0 6 L11 1" fill="none" stroke="#2b2b2b" stroke-width="2"/></svg>
<div style="position:absolute;left:525px;top:77px;width:82px;height:47px;box-sizing:border-box;border:1.5px solid #7a7a7a;border-radius:8px;background:#fff;"></div>
<div style="position:absolute;left:530.00px;top:91.20px;font:400 19.5px/19.5px 'Liberation Sans', sans-serif;color:#252525;white-space:nowrap;">11</div>
<svg style="position:absolute;left:588px;top:97px;overflow:visible;" width="12" height="7" viewBox="0 0 12 7"><path d="M1 1 L6.0 6 L11 1" fill="none" stroke="#2b2b2b" stroke-width="2"/></svg>
<svg style="position:absolute;left:617px;top:82px;overflow:visible;" width="26" height="30" viewBox="0 0 26 30"><path d="M2.5 28 L13 2 L23.5 28 M6.2 19 H19.8" fill="none" stroke="#2b2b2b" stroke-width="2"/></svg>
<svg style="position:absolute;left:642px;top:85px;overflow:visible;" width="9" height="7" viewBox="0 0 9 7"><path d="M1 6 L4.5 1.5 L8 6" fill="none" stroke="#3b88c8" stroke-width="1.8"/></svg>
<svg style="position:absolute;left:668px;top:88px;overflow:visible;" width="22" height="24" viewBox="0 0 22 24"><path d="M2.5 22 L11 2 L19.5 22 M5.5 15 H16.5" fill="none" stroke="#2b2b2b" stroke-width="1.9"/></svg>
<svg style="position:absolute;left:687px;top:86px;overflow:visible;" width="10" height="6" viewBox="0 0 10 6"><path d="M1 1 L5 5 L9 1" fill="none" stroke="#3b88c8" stroke-width="1.8"/></svg>
<svg style="position:absolute;left:718px;top:82px;overflow:visible;" width="20" height="36" viewBox="0 0 20 36"><path d="M9.7 2.4 V33.6" stroke="#2b2b2b" stroke-width="2"/><path d="M16 10 C14.5 6.8 12 5.5 9.5 5.5 C5.5 5.5 3 7.8 3 11 C3 15 7 16.5 10 17.5 C13.5 18.5 17 20 17 24 C17 27.5 14 30 9.5 30 C6 30 3.5 28.5 2.5 25" fill="none" stroke="#2b2b2b" stroke-width="2"/></svg>
<svg style="position:absolute;left:759px;top:97px;overflow:visible;" width="12" height="7" viewBox="0 0 12 7"><path d="M1 1 L6.0 6 L11 1" fill="none" stroke="#2b2b2b" stroke-width="2"/></svg>
<svg style="position:absolute;left:790px;top:84px;overflow:visible;" width="34" height="32" viewBox="0 0 34 32"><circle cx="8" cy="8.5" r="5.5" fill="none" stroke="#2b2b2b" stroke-width="2"/><circle cx="25.5" cy="22.5" r="5.5" fill="none" stroke="#2b2b2b" stroke-width="2"/><path d="M27.5 2 L10.5 29.3" stroke="#2b2b2b" stroke-width="2"/></svg>
<svg style="position:absolute;left:849px;top:88px;overflow:visible;" width="15" height="25" viewBox="0 0 15 25"><circle cx="7.5" cy="7.5" r="6.5" fill="#2b2b2b"/><path d="M13.5 8 C14 16 9 22 2 24" fill="none" stroke="#2b2b2b" stroke-width="3"/></svg>
<svg style="position:absolute;left:887px;top:84px;overflow:visible;" width="30" height="29" viewBox="0 0 30 29">
      <rect x="1" y="1" width="28" height="27" fill="none" stroke="#2b2b2b" stroke-width="2"/>
      <path d="M15 1 V28" stroke="#2b2b2b" stroke-width="1.6"/>
      <rect x="1" y="6" width="28" height="16" fill="#fff" stroke="#3b88c8" stroke-width="2"/>
      <path d="M5 14 H25 M5 14 L9 10.5 M5 14 L9 17.5 M25 14 L21 10.5 M25 14 L21 17.5" fill="none" stroke="#3b88c8" stroke-width="1.8"/>
    </svg>
<div style="position:absolute;left:421.00px;top:132.30px;font:700 28px/28px 'Liberation Sans', sans-serif;color:#2b2b2b;white-space:nowrap;transform:scaleX(0.8333);transform-origin:1.00px 0;">B</div>
<div style="position:absolute;left:472.00px;top:132.30px;font:italic 400 28px/28px 'Liberation Serif', serif;color:#2b2b2b;white-space:nowrap;transform:scaleX(1.0833);transform-origin:-1.00px 0;">I</div>
<div style="position:absolute;left:504px;top:125px;width:42px;height:46px;box-sizing:border-box;background:#e9e9e9;border:1.5px solid #6a6a6a;border-radius:8px;"></div>
<div style="position:absolute;left:511px;top:134px;width:28px;height:2px;background:#2b2b2b;"></div>
<div style="position:absolute;left:515px;top:142px;width:20px;height:2px;background:#2b2b2b;"></div>
<div style="position:absolute;left:511px;top:150px;width:28px;height:2px;background:#2b2b2b;"></div>
<div style="position:absolute;left:515px;top:158px;width:20px;height:2px;background:#2b2b2b;"></div>
<svg style="position:absolute;left:561px;top:130px;overflow:visible;" width="28" height="26" viewBox="0 0 28 26">
      <path d="M11 5.6 L1.2 15.4 L10.4 24.4 L20.4 13.4" fill="none" stroke="#2b2b2b" stroke-width="1.9" stroke-linejoin="round"/>
      <path d="M11.4 10 V4.5 C11.4 1.5 15.1 1.5 15.1 4.5 V13.4" fill="none" stroke="#2b2b2b" stroke-width="1.8"/>
      <path d="M18.3 12 C18.8 9.5 21 8.8 22.6 10 C24.2 11.5 23.6 16 23.1 21.5 C22 18 20.5 14 18.3 12 Z" fill="#2f6fb0"/>
    </svg>
<div style="position:absolute;left:557px;top:156px;width:32px;height:8px;background:#f2f25a;"></div>
<svg style="position:absolute;left:604px;top:145px;overflow:visible;" width="11" height="7" viewBox="0 0 11 7"><path d="M1 1 L5.5 6 L10 1" fill="none" stroke="#2b2b2b" stroke-width="2"/></svg>
<svg style="position:absolute;left:635px;top:130px;overflow:visible;" width="32" height="26" viewBox="0 0 32 26"><path d="M7.2 23.6 L16.4 2.3 L25.6 23.6 M10.3 16.5 H22.5" fill="none" stroke="#2b2b2b" stroke-width="2"/></svg>
<div style="position:absolute;left:635px;top:156px;width:32px;height:8px;background:#e22b22;"></div>
<svg style="position:absolute;left:681px;top:145px;overflow:visible;" width="12" height="7" viewBox="0 0 12 7"><path d="M1 1 L6.0 6 L11 1" fill="none" stroke="#2b2b2b" stroke-width="2"/></svg>
<svg style="position:absolute;left:713px;top:132px;overflow:visible;" width="30" height="30" viewBox="0 0 30 30">
      <path d="M1 1 H29 V27 M1 1 V27 M15 1 V27 M1 14 H29" fill="none" stroke="#2b2b2b" stroke-width="2" stroke-dasharray="2 2.5"/>
      <path d="M0 28.5 H30" stroke="#111" stroke-width="2.6"/>
    </svg>
<svg style="position:absolute;left:759px;top:145px;overflow:visible;" width="12" height="7" viewBox="0 0 12 7"><path d="M1 1 L6.0 6 L11 1" fill="none" stroke="#2b2b2b" stroke-width="2"/></svg>
<svg style="position:absolute;left:791px;top:132px;overflow:visible;" width="31" height="30" viewBox="0 0 31 30">
      <path d="M2 8 H18 M2 8 L7.5 3 M2 8 L7.5 13" fill="none" stroke="#3b88c8" stroke-width="1.9"/>
      <text x="19" y="13" font-family="Liberation Sans" font-size="17" fill="#2b2b2b">0</text>
      <text x="3" y="29.5" font-family="Liberation Sans" font-size="17" fill="#2b2b2b">.00</text>
    </svg>
<svg style="position:absolute;left:839px;top:132px;overflow:visible;" width="31" height="30" viewBox="0 0 31 30">
      <text x="3" y="13" font-family="Liberation Sans" font-size="17" fill="#2b2b2b">.00</text>
      <path d="M1 24 H17 M17 24 L11.5 19 M17 24 L11.5 29" fill="none" stroke="#3b88c8" stroke-width="1.9"/>
      <text x="18" y="29.5" font-family="Liberation Sans" font-size="17" fill="#2b2b2b">0</text>
      <circle cx="17" cy="28" r="0"/>
    </svg>
<svg style="position:absolute;left:887px;top:132px;overflow:visible;" width="32" height="30" viewBox="0 0 32 30">
      <path d="M2 13 C8 11 13 9 16 6 L25 16 C22 19 19 24 16 29 Z" fill="#f5d58a" stroke="#d9822b" stroke-width="2.2" stroke-linejoin="round"/>
      <path d="M4 15 L16 17 L16 29" fill="none" stroke="#d9822b" stroke-width="2"/>
      <path d="M15 7 L24 16 L27 13 L23 9 L30 3 C31 1.5 29.5 0 28 1 L21 7 L18 4 Z" fill="#fff" stroke="#2b2b2b" stroke-width="2" stroke-linejoin="round"/>
    </svg>
<div style="position:absolute;left:0px;top:8px;width:1px;height:1548px;background:#8fb9a6;"></div>
<div style="position:absolute;left:1px;top:8px;width:2px;height:1548px;background:#3c6e4e;"></div>
<div style="position:absolute;left:3px;top:8px;width:1px;height:1548px;background:#dff2e4;"></div>
<svg style="position:absolute;left:0px;top:0px;overflow:visible;" width="10" height="10" viewBox="0 0 10 10"><path d="M0 0 H6 C3 1.5 1 4 1 9 V10 H0 Z" fill="#8fb9a6"/><path d="M2 10 V8.5 C2 4.5 3.5 2 7.5 0" fill="none" stroke="#3c6e4e" stroke-width="2"/></svg>
<svg style="position:absolute;left:0px;top:1550px;overflow:visible;" width="14" height="14" viewBox="0 0 14 14"><path d="M2 0 V4 C2 10 5 13 11 13 H14" fill="none" stroke="#3c6e4e" stroke-width="2"/></svg>
<div style="position:absolute;left:0px;top:1564px;width:1838px;height:1px;background:#aab0b8;"></div>
<div style="position:absolute;left:0px;top:1565px;width:1838px;height:9px;background:linear-gradient(90deg,#dfe7ee 0,#d9e1ea 25%,#c9d0e0 50%,#c6cde0 100%);"></div>
</body></html>
